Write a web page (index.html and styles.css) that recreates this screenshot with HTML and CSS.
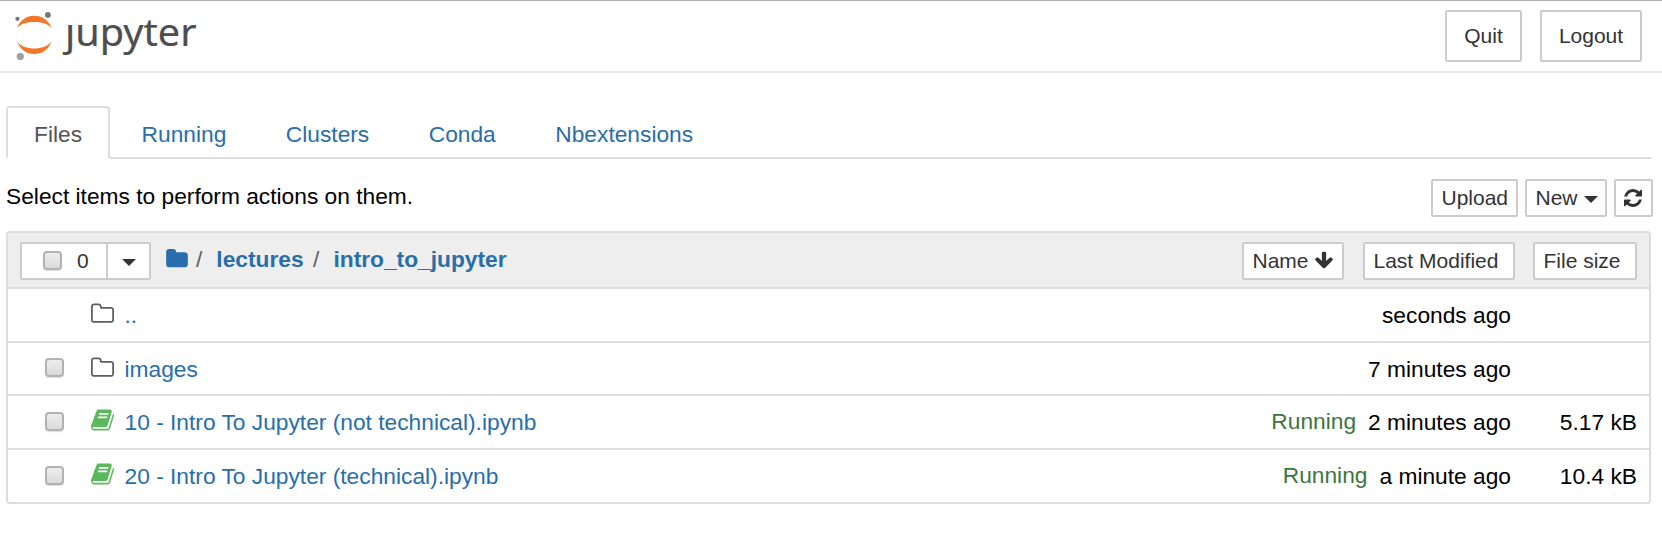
FILE: index.html
```html
<!DOCTYPE html>
<html lang="en">
<head>
<meta charset="utf-8">
<title>intro_to_jupyter</title>
<link rel="stylesheet" href="styles.css">
</head>
<body>
<svg class="defs" width="0" height="0" aria-hidden="true">
  <symbol id="folder" viewBox="0 0 1664 1536"><path d="M1664 480v704q0 92-66 158t-158 66H224q-92 0-158-66T0 1184V224q0-92 66-158T224 0h320q92 0 158 66t66 158v32h672q92 0 158 66t66 158z"/></symbol>
  <symbol id="folder-o" viewBox="0 0 1664 1536"><path d="M1536 1184V480q0-40-28-68t-68-28H736q-40 0-68-28t-28-68v-64q0-40-28-68t-68-28H224q-40 0-68 28t-28 68v960q0 40 28 68t68 28h1216q40 0 68-28t28-68zm128-704v704q0 92-66 158t-158 66H224q-92 0-158-66T0 1184V224q0-92 66-158T224 0h320q92 0 158 66t66 158v32h672q92 0 158 66t66 158z"/></symbol>
  <symbol id="book" viewBox="0 0 1664 1536"><path d="M1639 350q40 57 18 129l-275 906q-19 64-76.500 107.500T1183 1536H260q-77 0-148.500-53.500T12 1351q-24-67-2-127 0-4 3-27t4-37q1-8-3-21.500t-3-19.500q2-11 8-21t16.500-23.500T52 1051q23-38 45-91.500t30-91.500q3-10 .5-30t-.5-28q3-11 17-28t17-23q21-36 42-92t25-90q1-9-2.500-32t.5-28q4-13 22-30.500t22-22.500q19-26 42.500-84.500T340 283q1-8-3-25.500t-2-26.500q2-8 9-18t18-23 17-21q8-12 16.500-30.500T411 103.500t16-36 19.500-32T473 12t36-11.500T556.500 6l-1 3Q593 0 606 0h761q74 0 114 56t18 130l-274 906q-36 119-71.500 153.500T1025 1280H156q-27 0-38 15-11 16-1 43 24 70 144 70h923q29 0 56-15.500t35-41.500l300-987q7-22 5-57 38 15 59 43zM575 352q-4 13 2 22.500t20 9.500h608q13 0 25.500-9.500T1247 352l21-64q4-13-2-22.500t-20-9.500H638q-13 0-25.500 9.500T596 288zm-83 256q-4 13 2 22.500t20 9.500h608q13 0 25.500-9.500T1164 608l21-64q4-13-2-22.500t-20-9.500H555q-13 0-25.500 9.500T513 544z"/></symbol>
  <symbol id="refresh" viewBox="0 0 1536 1536"><path d="M1511 928q0 5-1 7-64 268-268 434.500T764 1536q-146 0-282.500-55T238 1324l-129 129q-19 19-45 19t-45-19-19-45V960q0-26 19-45t45-19h448q26 0 45 19t19 45-19 45l-137 137q71 66 161 102t187 36q134 0 250-65t186-179q11-17 53-117 8-23 30-23h192q13 0 22.500 9.500T1511 928zm25-800v448q0 26-19 45t-45 19h-448q-26 0-45-19t-19-45 19-45l138-138Q969 256 768 256q-134 0-250 65T332 500q-11 17-53 117-8 23-30 23H50q-13 0-22.500-9.500T18 608v-7q65-268 270-434.500T768 0q146 0 284 55.500T1297 212l130-129q19-19 45-19t45 19 19 45z"/></symbol>
  <symbol id="arrow-down" viewBox="0 0 1600 1600"><path d="M1545 832q0 53-37 90l-651 652q-39 37-91 37-53 0-90-37L25 922q-38-36-38-90 0-53 38-91l74-75q39-37 91-37 53 0 90 37l294 294V256q0-52 38-90t90-38h128q52 0 90 38t38 90v704l294-294q37-37 90-37 52 0 91 37l75 75q36 39 36 91z" transform="translate(34 -70)"/></symbol>
</svg>

<header class="topbar">
  <svg class="logo" width="200" height="66" viewBox="0 0 200 66" role="img" aria-label="jupyter">
    <path class="planet" d="M17 28C20 20 26.500 15.700 34.300 15.700S48.500 20 51.700 28C47.500 23.500 41 22 34.300 22S21 23.500 17 28z"/>
    <path class="planet" d="M17 41.500C20 49.500 26.500 54 34.300 54S48.500 49.500 51.700 41.500C47.500 46.500 41 48.500 34.300 48.500S21 46.500 17 41.500z"/>
    <circle class="moon" cx="47.900" cy="14.900" r="2.900"/>
    <circle class="moon" cx="17.400" cy="18.800" r="2.100"/>
    <circle class="moon-light" cx="20.300" cy="56.500" r="3.600"/>
    <text class="wordmark" x="65" y="45.500" textLength="131.500" lengthAdjust="spacingAndGlyphs">ȷupyter</text>
  </svg>
  <div class="session">
    <button class="btn btn-lg quit">Quit</button>
    <button class="btn btn-lg logout">Logout</button>
  </div>
</header>

<main class="page">
  <nav class="tabs">
    <a class="tab active">Files</a>
    <a class="tab">Running</a>
    <a class="tab">Clusters</a>
    <a class="tab">Conda</a>
    <a class="tab">Nbextensions</a>
  </nav>

  <div class="toolbar">
    <span class="hint">Select items to perform actions on them.</span>
    <div class="actions">
      <button class="btn upload">Upload</button>
      <button class="btn new">New<i class="caret"></i></button>
      <button class="btn reload" aria-label="Refresh"><svg width="18" height="18"><use href="#refresh"/></svg></button>
    </div>
  </div>

  <section class="list">
    <div class="list-head">
      <div class="select-group">
        <button class="btn select-all"><i class="check"></i>0</button>
        <button class="btn select-menu" aria-label="Select"><i class="caret"></i></button>
      </div>
      <div class="crumbs">
        <svg class="home" width="22" height="20"><use href="#folder"/></svg>
        <span class="sep">/</span><a class="crumb first">lectures</a><span class="sep second">/</span><a class="crumb">intro_to_jupyter</a>
      </div>
      <div class="sorts">
        <button class="btn sort-name">Name<svg width="18" height="18"><use href="#arrow-down"/></svg></button>
        <button class="btn sort-modified">Last Modified</button>
        <button class="btn sort-size">File size</button>
      </div>
    </div>
    <div class="row">
      <span class="pick"></span>
      <svg class="icon folder" width="23" height="22"><use href="#folder-o"/></svg>
      <a class="name">..</a><span class="running"></span><span class="modified">seconds ago</span><span class="size"></span>
    </div>
    <div class="row short">
      <span class="pick"><i class="check"></i></span>
      <svg class="icon folder" width="23" height="22"><use href="#folder-o"/></svg>
      <a class="name">images</a><span class="running"></span><span class="modified">7 minutes ago</span><span class="size"></span>
    </div>
    <div class="row">
      <span class="pick"><i class="check"></i></span>
      <svg class="icon notebook" width="23" height="22"><use href="#book"/></svg>
      <a class="name">10 - Intro To Jupyter (not technical).ipynb</a><span class="running">Running</span><span class="modified">2 minutes ago</span><span class="size">5.17 kB</span>
    </div>
    <div class="row">
      <span class="pick"><i class="check"></i></span>
      <svg class="icon notebook" width="23" height="22"><use href="#book"/></svg>
      <a class="name">20 - Intro To Jupyter (technical).ipynb</a><span class="running">Running</span><span class="modified">a minute ago</span><span class="size">10.4 kB</span>
    </div>
  </section>
</main>
</body>
</html>
```
FILE: styles.css
```css
* { box-sizing: border-box; }
body {
  margin: 0;
  height: 533px;
  overflow: hidden;
  background: #fff;
  color: #000;
  font: 22.75px/32px "Liberation Sans", Arial, sans-serif;
}
svg { display: block; fill: currentColor; }
.defs { position: absolute; }
a { color: #296eaa; text-decoration: none; }

.topbar {
  display: flex;
  justify-content: space-between;
  height: 73px;
  border-top: 1px solid #b0b0b0;
  border-bottom: 2px solid #e7e7e7;
}
.logo { margin-top: -1px; }
.planet { fill: #f37726; }
.moon { fill: #767677; }
.moon-light { fill: #9e9e9e; }
.wordmark { font: 39px "Noto Sans", sans-serif; fill: #4e4e4e; stroke: #4e4e4e; stroke-width: .2px; }
.session { display: flex; gap: 18px; padding: 9px 20px 0 0; }

.btn {
  display: flex;
  align-items: center;
  height: 38px;
  margin: 0;
  padding: 0 0 0 8.5px;
  border: 2px solid #ccc;
  border-radius: 2px;
  background: #fff;
  color: #333;
  font: 21px/30px "Liberation Sans", Arial, sans-serif;
  white-space: nowrap;
}
.btn-lg { height: 52px; justify-content: center; padding: 0; }
.quit { width: 77px; }
.logout { width: 102px; }
.caret {
  border: 7px solid transparent;
  border-top-color: #333;
  border-bottom: 0;
}

.page { padding: 33px 11px 0 6px; }
.tabs { display: flex; height: 53px; border-bottom: 2px solid #ddd; }
.tab { height: 53px; padding: 10px 26px 0; margin-right: 3.5px; border: 2px solid transparent; }
.tab.active {
  border-color: #ddd;
  border-bottom-color: #fff;
  border-radius: 4px 4px 0 0;
  background: #fff;
  color: #555;
}

.toolbar { display: flex; justify-content: space-between; height: 72px; margin-right: -2px; padding-top: 20px; }
.hint { padding-top: 1px; }
.actions { display: flex; gap: 7px; }
.upload { width: 87px; }
.new { width: 82px; }
.new .caret { margin: 2px 0 0 6px; }
.reload { width: 39px; padding: 0 0 1px 8px; }

.list { border: 2px solid #ddd; border-radius: 4px; }
.list-head { display: flex; height: 54px; padding: 9px 12px 0; background: #eee; }
.select-group { display: flex; }
.select-all { width: 88px; padding-left: 21px; border-radius: 2px 0 0 2px; gap: 15px; }
.select-all .check { margin-top: -2px; }
.select-menu { width: 45px; margin-left: -2px; padding: 3px 0 0 14px; border-radius: 0 2px 2px 0; }
.check {
  width: 19px;
  height: 19px;
  border: 2px solid #b2b2b2;
  border-radius: 4px;
  background: linear-gradient(#ededed, #dadada);
  box-shadow: 0 1px 1px #ddd;
}
.crumbs { display: flex; flex: 1; padding: 1px 0 0 15px; }
.home { margin-top: 6px; color: #296eaa; }
.sep { margin-left: 8px; color: #5e5e5e; }
.crumb { margin-left: 14px; font-weight: bold; }
.sep.second { margin-left: 9.5px; }
.sorts { display: flex; gap: 19px; }
.sort-name { width: 102px; }
.sort-name svg { margin: -2px 0 0 6.5px; }
.sort-modified { width: 152px; }
.sort-size { width: 104px; margin-left: -1px; }

.row { display: flex; height: 54px; padding: 10px 12px 0 37px; border-top: 2px solid #ddd; }
.row.short { height: 53px; }
.row.short .pick { padding-top: 5px; }
.pick { width: 46px; padding-top: 6px; }
.pick .check { display: block; }
.icon { margin: 4px 10.5px 0 0; }
.notebook { margin-top: 3px; color: #5cb85c; }
.folder { color: #5e5e5e; }
.name { flex: 1; }
.running { color: #3c763d; margin: -1px 12px 0 0; }
.size { width: 126px; text-align: right; }
```
